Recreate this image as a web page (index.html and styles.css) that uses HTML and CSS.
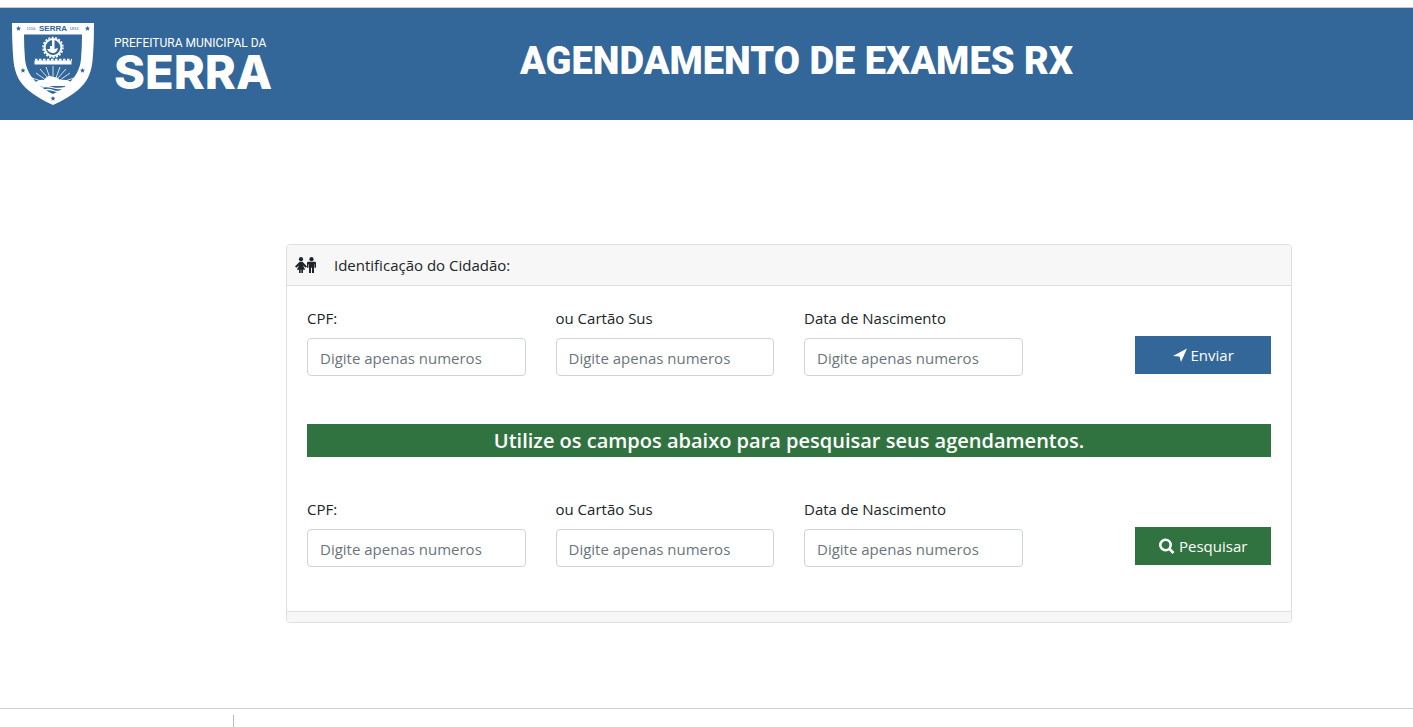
FILE: index.html
```html
<!DOCTYPE html>
<html lang="pt-BR">
<head>
<meta charset="utf-8">
<meta name="viewport" content="width=device-width, initial-scale=1">
<title>Agendamento de Exames RX</title>
<link rel="stylesheet" href="styles.css">
</head>
<body>
<header class="topbar">
  <div class="brand">
    <svg class="crest" viewBox="0 0 82 82" aria-hidden="true">
      <path class="light" d="M0 0H82Q82 22 80.500 38C79 52 74 60 66 67Q55 76 41 82Q27 76 16 67C8 60 3 52 1.500 38Q0 22 0 0Z"/>
      <path class="blue" d="M12 11.500H70Q70 24 69 36C68 47 63 54 57 60Q50 67 41 71Q32 67 25 60C19 54 14 47 13 36Q12 24 12 11.500Z"/>
      <circle class="ring" cx="41" cy="24.500" r="8.400"/>
      <circle class="teeth" cx="41" cy="24.500" r="10"/>
      <path class="light" d="M35 26h3v-3h2v-6h2.500v9l3.500-1q-1 5-5 5t-6-4Z"/>
      <path class="light" d="M22.500 37.500h37v4h-37z"/>
      <path class="battlement" d="M23 36.800H60"/>
      <path class="rays" d="M41 55V43M38 55L34 44M44 55L48 44M36 55L28 46M46 55L54 46M34 57L24 50M48 57L58 50M32 59L20 55M50 59L62 55"/>
      <path class="light" d="M22 60Q28 56 32 57Q36 51 41 54Q46 54 48 57Q56 56 60 60L57 63H25Z"/>
      <path class="waves" d="M28 64.500q6-2 12 0t14 0M32 67.500q4-2 9 0t9 0"/>
      <g class="blue">
        <path id="star" d="M6.500 3l.7 1.600 1.800.1-1.400 1.200.5 1.800-1.600-1-1.600 1 .5-1.800L4 4.700l1.800-.1Z"/>
        <use href="#star" x="69"/>
        <use href="#star" x="4.500" y="42"/>
        <use href="#star" x="64" y="42"/>
        <use href="#star" x="34.500" y="70"/>
      </g>
      <text class="crest-name" x="41" y="8" text-anchor="middle">SERRA</text>
      <text class="crest-year" x="19" y="7" text-anchor="middle">1556</text>
      <text class="crest-year" x="62" y="7" text-anchor="middle">1833</text>
    </svg>
    <div class="wordmark">
      <span class="wordmark-top">PREFEITURA MUNICIPAL DA</span>
      <span class="wordmark-city">SERRA</span>
    </div>
  </div>
  <h1 class="title">AGENDAMENTO DE EXAMES RX</h1>
</header>

<main class="content">
  <section class="card">
    <div class="card-header">
      <svg class="people" viewBox="0 0 22 16" aria-hidden="true">
        <circle cx="6" cy="2.200" r="2.100"/>
        <path d="M4.500 4.800h3L12 9.600l-1.300 1.200L8 8.500l2.200 4.200H8V16H6.300v-3.300h-.6V16H4v-3.300H1.800L4 8.500l-2.700 2.300L0 9.600Z"/>
        <circle cx="16.500" cy="2.200" r="2.100"/>
        <path d="M13.300 4.800h6.400q1.300 0 1.300 1.300v4.700h-1.600V7.300H19V16h-2v-5.200h-1V16h-2V7.300h-.5v3.500H12V6.100q0-1.300 1.300-1.300Z"/>
      </svg>
      <span>Identificação do Cidadão:</span>
    </div>
    <div class="card-body">
      <form class="row">
        <div class="field">
          <label for="cpf">CPF:</label>
          <input id="cpf" type="text" placeholder="Digite apenas numeros">
        </div>
        <div class="field">
          <label for="sus">ou Cartão Sus</label>
          <input id="sus" type="text" placeholder="Digite apenas numeros">
        </div>
        <div class="field">
          <label for="nasc">Data de Nascimento</label>
          <input id="nasc" type="text" placeholder="Digite apenas numeros">
        </div>
        <button class="btn btn-send" type="submit">
          <svg class="icon" viewBox="0 0 14 14" aria-hidden="true"><path d="M14 0.500L8 14L6.500 8.500L0 8Z"/></svg>
          Enviar
        </button>
      </form>
      <h2 class="banner">Utilize os campos abaixo para pesquisar seus agendamentos.</h2>
      <form class="row">
        <div class="field">
          <label for="cpf2">CPF:</label>
          <input id="cpf2" type="text" placeholder="Digite apenas numeros">
        </div>
        <div class="field">
          <label for="sus2">ou Cartão Sus</label>
          <input id="sus2" type="text" placeholder="Digite apenas numeros">
        </div>
        <div class="field">
          <label for="nasc2">Data de Nascimento</label>
          <input id="nasc2" type="text" placeholder="Digite apenas numeros">
        </div>
        <button class="btn btn-search" type="submit">
          <svg class="icon icon-search" viewBox="0 0 16 16" aria-hidden="true"><circle cx="6.500" cy="7" r="5.200"/><path d="M10.500 11L14.500 15"/></svg>
          Pesquisar
        </button>
      </form>
    </div>
    <div class="card-footer"></div>
  </section>
</main>

<footer class="bottom"><div class="bottom-cell"></div></footer>
</body>
</html>
```
FILE: styles.css
```css
* { box-sizing: border-box; }

body {
  margin: 0;
  min-height: 100vh;
  display: flex;
  flex-direction: column;
  background: #fff;
  color: #212529;
  font: 15px/24px "Open Sans", "Noto Sans", sans-serif;
}

.topbar {
  display: grid;
  grid-template-columns: 20% 1fr 8%;
  align-items: start;
  margin-top: 7px;
  padding: 15px 0 15px 12px;
  border-top: 1px solid #c9c9d2;
  background: #336699;
  color: #fff;
}

.brand { display: flex; gap: 20px; }
.crest { width: 82px; height: 82px; flex: none; }
.light { fill: #fff; }
.blue { fill: #336699; }
.ring { fill: none; stroke: #fff; stroke-width: 2; }
.teeth { fill: none; stroke: #fff; stroke-width: 1.500; stroke-dasharray: 2 1.500; }
.battlement { fill: none; stroke: #fff; stroke-width: 2; stroke-dasharray: 2.500 1.500; }
.rays { fill: none; stroke: #fff; stroke-width: .8; }
.waves { fill: none; stroke: #fff; stroke-width: 1.300; }
.crest-name { fill: #336699; font: bold 8px "Liberation Sans", sans-serif; }
.crest-year { fill: #336699; font: 4px "Liberation Sans", sans-serif; }

.wordmark { display: flex; flex-direction: column; padding-top: 13px; white-space: nowrap; }
.wordmark-top { font: 12px/14px Roboto, sans-serif; }
.wordmark-city { font: 800 47px/44px Inter, sans-serif; }

.title {
  margin: 0;
  padding-top: 12px;
  text-align: center;
  font: 900 38px/52px Roboto, sans-serif;
}

.content { flex: 1; padding: 124px 121px 84px 286px; }

.card { border: 1px solid #dfdfdf; border-radius: 4px; overflow: hidden; }
.card-header {
  display: flex;
  align-items: center;
  gap: 17px;
  padding: 8px;
  background: #f7f7f7;
  border-bottom: 1px solid #dfdfdf;
}
.people { width: 22px; height: 16px; fill: #212529; }
.card-body { padding: 20px 20px 44px; }
.card-footer { height: 11px; background: #f7f7f7; border-top: 1px solid #dfdfdf; }

.row { display: grid; grid-template-columns: repeat(12, 1fr); column-gap: 30px; }
.field { grid-column: span 3; }
.field label { display: block; margin-bottom: 8px; }
.field input {
  display: block;
  width: 100%;
  height: 38px;
  padding: 8px 12px 6px;
  border: 1px solid #ced4da;
  border-radius: 4px;
  background: #fff;
  color: #495057;
  font: inherit;
}
.field input::placeholder { color: #6c757d; opacity: 1; }

.btn {
  grid-column: 11 / span 2;
  align-self: end;
  display: flex;
  align-items: center;
  justify-content: center;
  gap: 4px;
  height: 38px;
  margin-bottom: 2px;
  padding: 0;
  border: 0;
  color: #fff;
  font: inherit;
}
.btn-send { background: #336699; }
.btn-search { background: #317340; }
.icon { width: 14px; height: 14px; fill: #fff; }
.icon-search { width: 16px; height: 16px; fill: none; stroke: #fff; stroke-width: 2.600; }

.banner {
  margin: 48px 0 40px;
  background: #317340;
  color: #fff;
  text-align: center;
  font: 600 20px/33px "Open Sans", "Noto Sans", sans-serif;
}

.bottom { height: 19px; padding-top: 6px; border-top: 1px solid #ccc; }
.bottom-cell { width: 234px; height: 12px; border-right: 1px solid #bbb; }
```
